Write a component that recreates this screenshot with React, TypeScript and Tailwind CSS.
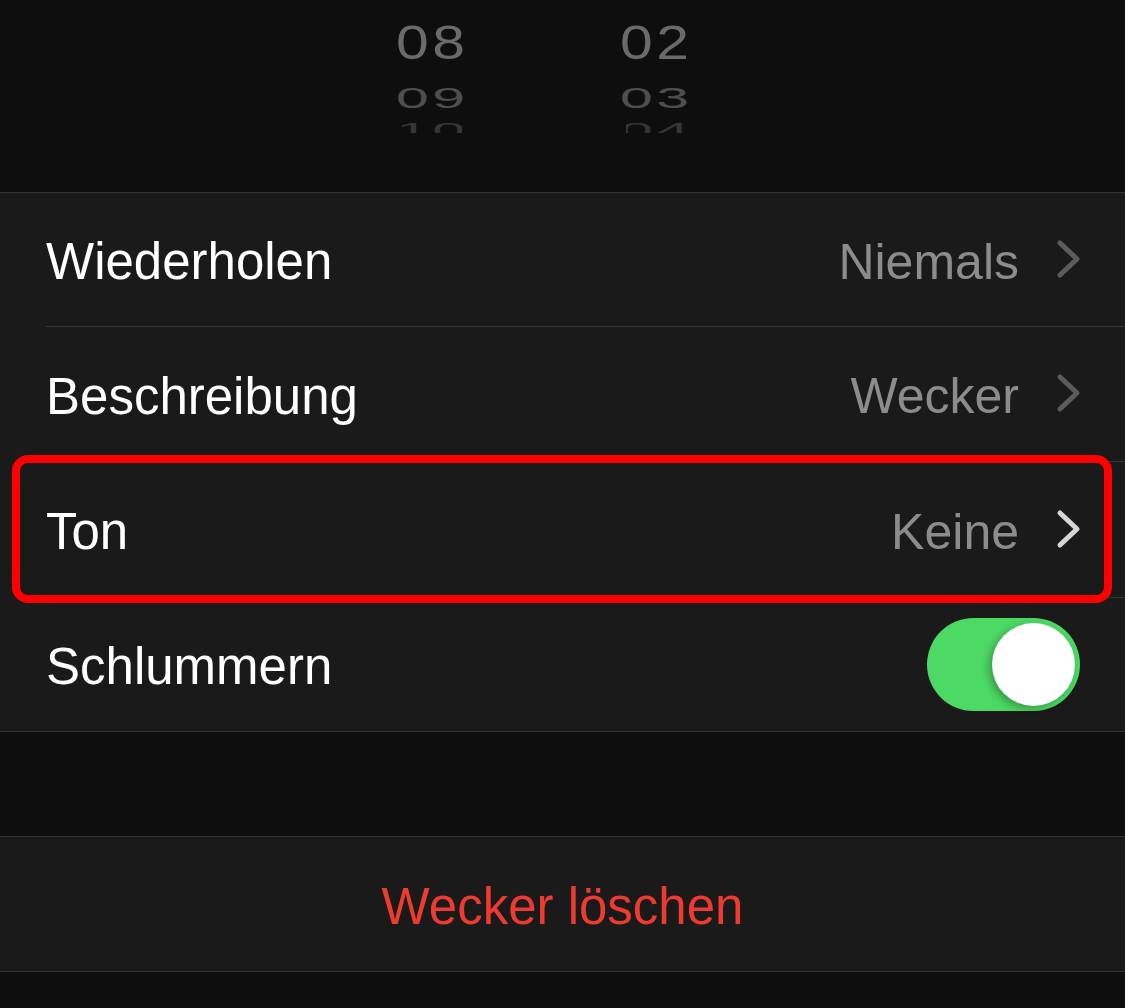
import type { ReactNode } from 'react';

const font = { fontFamily: '"Liberation Sans", Arial, sans-serif' };

type Row = { label: string; value?: string; chevron?: 'dim' | 'bright'; toggle?: boolean; height: string; highlight?: boolean };

const rows: Row[] = [
  { label: 'Wiederholen', value: 'Niemals', chevron: 'dim', height: 'h-[134px]' },
  { label: 'Beschreibung', value: 'Wecker', chevron: 'dim', height: 'h-[135px]' },
  { label: 'Ton', value: 'Keine', chevron: 'bright', height: 'h-[136px]', highlight: true },
  { label: 'Schlummern', toggle: true, height: 'h-[133px]' },
];

export default function App() {
  return (
    <div className="min-h-[1008px] w-[1125px] overflow-hidden bg-[#0e0e0e]" style={font}>
      <TimePicker />

      <div className="border-y border-[#343434] bg-[#1a1a1a]">
        {rows.map((row, i) => (
          <div key={row.label} className={`relative pl-[46px] ${row.height}`}>
            <div
              className={`flex h-full items-center justify-between ${row.toggle ? 'pr-[45px]' : 'pr-[43px]'} ${
                i < rows.length - 1 ? 'border-b border-[#343434]' : ''
              }`}
            >
              <span className="pt-[4px] text-[51px] leading-none text-white">{row.label}</span>
              {row.toggle ? (
                <Toggle />
              ) : (
                <span className="flex items-center">
                  <span className="pt-[4px] text-[50px] leading-none text-[#8c8c8c]">{row.value}</span>
                  <Chevron bright={row.chevron === 'bright'} />
                </span>
              )}
            </div>
            {row.highlight && (
              <div className="pointer-events-none absolute left-[12px] right-[13px] top-[-7px] h-[148px] rounded-[16px] border-[8px] border-[#ff0000]" />
            )}
          </div>
        ))}
      </div>

      <div className="mt-[104px] flex h-[136px] items-center justify-center border-y border-[#343434] bg-[#1a1a1a]">
        <span className="pt-[4px] text-[51px] leading-none text-[#ee3a2f]">Wecker löschen</span>
      </div>
    </div>
  );
}

function TimePicker() {
  return (
    <div className="flex h-[192px] gap-[74px] pl-[357px] pt-[18px]">
      <PickerColumn values={['08', '09', '10']} />
      <PickerColumn values={['02', '03', '04']} />
    </div>
  );
}

// the wheel rows below the selection, squashed as they turn away
function PickerColumn({ values }: { values: string[] }) {
  return (
    <div className="flex w-[150px] flex-col items-center">
      <Digits className="text-[#6a6a6a]">{values[0]}</Digits>
      <div className="mt-[7px]">
        <Digits className="scale-y-[0.6] text-[#4e4e4e]">{values[1]}</Digits>
      </div>
      <div className="-mt-[2px] h-[12px] overflow-hidden">
        <Digits className="origin-top scale-y-[0.4] text-[#363636]">{values[2]}</Digits>
      </div>
    </div>
  );
}

function Digits({ className, children }: { className: string; children: ReactNode }) {
  return (
    <div className={`h-[49px] text-[49px] leading-[49px] tracking-[3px] ${className}`}>
      <span className="inline-block scale-x-[1.2]">{children}</span>
    </div>
  );
}

function Chevron({ bright }: { bright: boolean }) {
  return (
    <svg width="26" height="40" viewBox="0 0 26 40" className="ml-[37px] -mt-[2px]" fill="none">
      <polyline
        points="4,4 21,20 4,36"
        stroke={bright ? '#d6d6d6' : '#5c5c5c'}
        strokeWidth="5"
        strokeLinecap="round"
        strokeLinejoin="round"
      />
    </svg>
  );
}

function Toggle() {
  return (
    <div className="flex h-[93px] w-[153px] items-center justify-end rounded-full bg-[#4cd964] pr-[5px]">
      <div className="h-[83px] w-[83px] rounded-full bg-white shadow-[-3px_3px_8px_rgba(0,0,0,0.3)]" />
    </div>
  );
}
